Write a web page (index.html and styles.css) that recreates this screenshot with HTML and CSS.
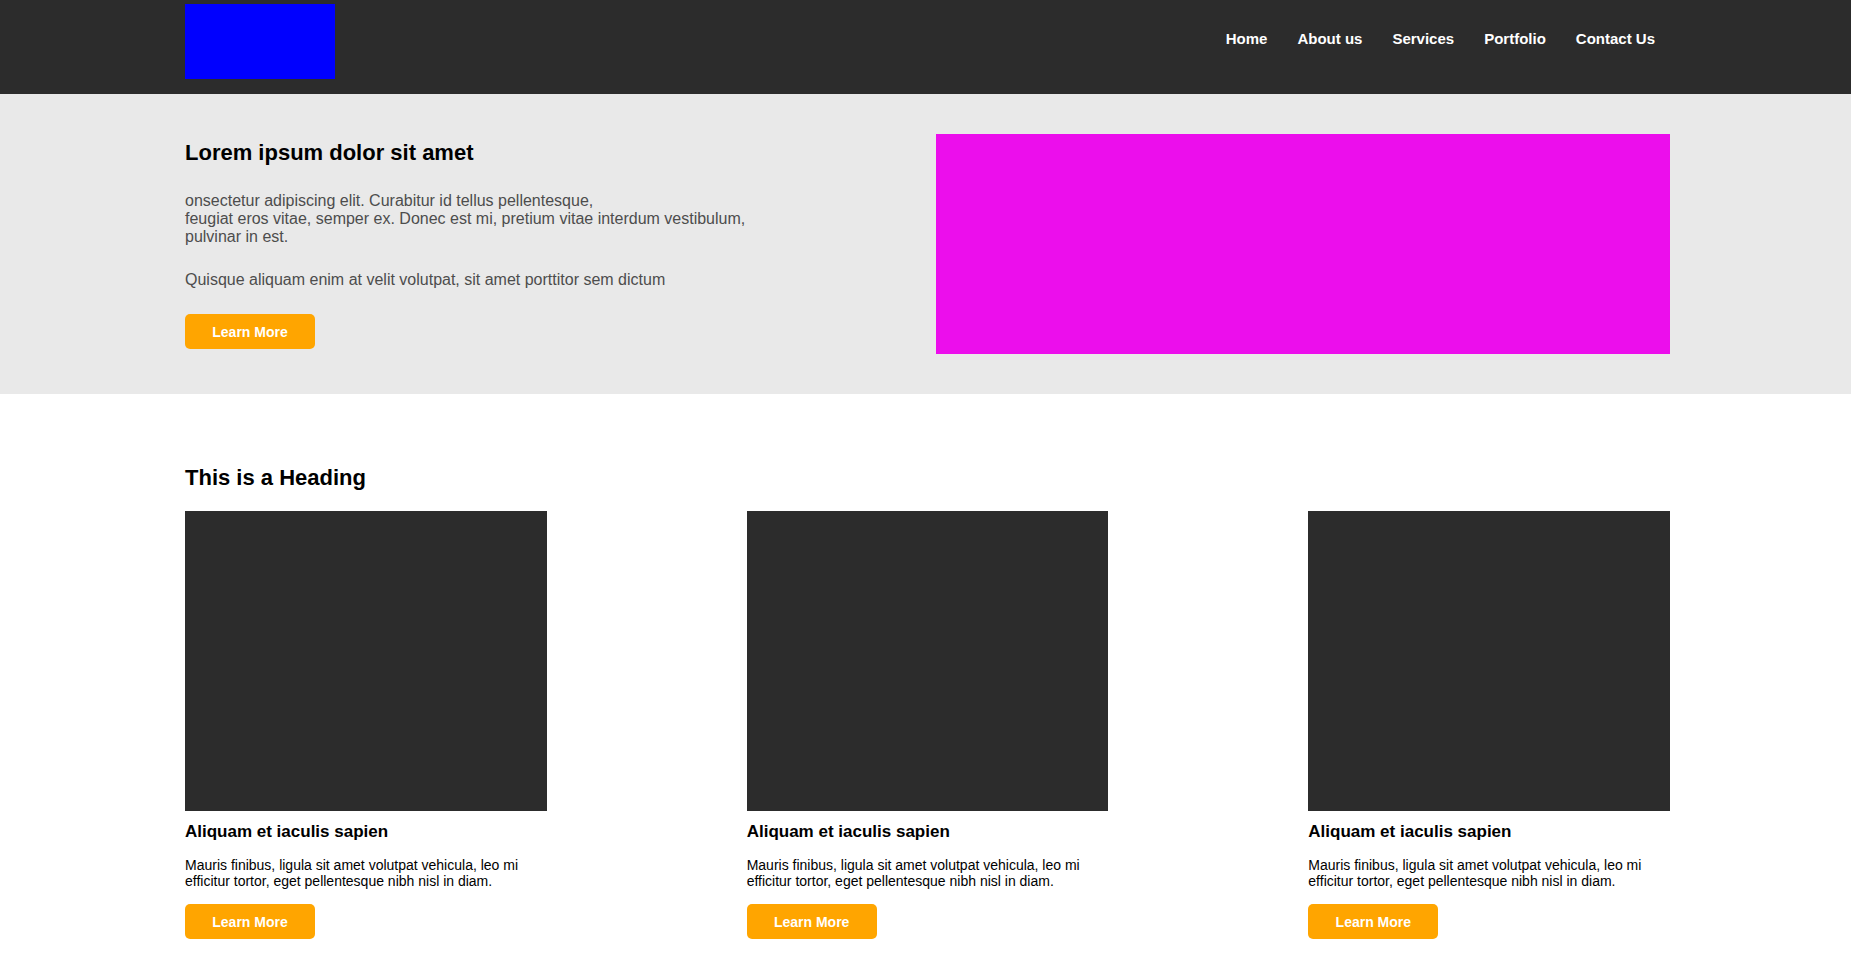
FILE: index.html
```html
<!DOCTYPE html>
<html lang="en">
<head>
<meta charset="utf-8">
<title>Home</title>
<link rel="stylesheet" href="styles.css">
</head>
<body>
<header class="header">
  <div class="logo"></div>
  <nav class="nav">
    <a href="#">Home</a>
    <a href="#">About us</a>
    <a href="#">Services</a>
    <a href="#">Portfolio</a>
    <a href="#">Contact Us</a>
  </nav>
</header>
<main>
  <section class="hero">
    <div class="hero-text">
      <h1 class="title">Lorem ipsum dolor sit amet</h1>
      <p>onsectetur adipiscing elit. Curabitur id tellus pellentesque,<br>feugiat eros vitae, semper ex. Donec est mi, pretium vitae interdum vestibulum,<br>pulvinar in est.</p>
      <p>Quisque aliquam enim at velit volutpat, sit amet porttitor sem dictum</p>
      <button class="button" type="button">Learn More</button>
    </div>
    <div class="hero-image"></div>
  </section>
  <section class="features">
    <h2 class="title">This is a Heading</h2>
    <div class="cards">
      <article class="card">
        <div class="card-image"></div>
        <h3>Aliquam et iaculis sapien</h3>
        <p>Mauris finibus, ligula sit amet volutpat vehicula, leo mi<br>efficitur tortor, eget pellentesque nibh nisl in diam.</p>
        <button class="button" type="button">Learn More</button>
      </article>
      <article class="card">
        <div class="card-image"></div>
        <h3>Aliquam et iaculis sapien</h3>
        <p>Mauris finibus, ligula sit amet volutpat vehicula, leo mi<br>efficitur tortor, eget pellentesque nibh nisl in diam.</p>
        <button class="button" type="button">Learn More</button>
      </article>
      <article class="card">
        <div class="card-image"></div>
        <h3>Aliquam et iaculis sapien</h3>
        <p>Mauris finibus, ligula sit amet volutpat vehicula, leo mi<br>efficitur tortor, eget pellentesque nibh nisl in diam.</p>
        <button class="button" type="button">Learn More</button>
      </article>
    </div>
  </section>
</main>
</body>
</html>
```
FILE: styles.css
```css
* {
  box-sizing: border-box;
  margin: 0;
}

body {
  font-family: "Liberation Sans", Arial, sans-serif;
  color: #000;
  background: #fff;
}

.header,
.hero,
.features {
  padding-left: 185px;
  padding-right: 181px;
}

.header {
  display: flex;
  justify-content: space-between;
  align-items: flex-start;
  padding-top: 4px;
  padding-bottom: 15px;
  background: #2c2c2c;
}

.logo {
  width: 150px;
  height: 75px;
  background: #00f;
}

.nav {
  display: flex;
  gap: 30px;
  padding: 26px 15px 0;
}

.nav a {
  font-size: 15px;
  line-height: 18px;
  font-weight: bold;
  color: #fff;
  text-decoration: none;
}

.hero {
  display: grid;
  grid-template-columns: 1fr 1fr;
  gap: 16px;
  padding-top: 40px;
  padding-bottom: 40px;
  background: #e9e9e9;
}

.hero-image {
  height: 220px;
  background: #ec0eec;
}

.title {
  font-size: 22px;
  line-height: 28px;
}

.hero-text {
  padding-top: 5px;
}

.hero-text p {
  margin-top: 25px;
  font-size: 16px;
  line-height: 18px;
  color: #4d4d4d;
}

.hero-text .button {
  margin-top: 25px;
}

.button {
  display: block;
  width: 130px;
  height: 35px;
  border: 0;
  border-radius: 5px;
  font-family: inherit;
  font-size: 14px;
  font-weight: bold;
  color: #fff;
  background: orange;
}

.features {
  padding-top: 70px;
  padding-bottom: 15px;
}

.cards {
  display: grid;
  grid-template-columns: 1fr 1fr 1fr;
  gap: 200px;
  margin-top: 19px;
}

.card-image {
  height: 300px;
  background: #2c2c2c;
}

.card h3 {
  margin-top: 10px;
  font-size: 17px;
  line-height: 22px;
}

.card p {
  margin-top: 14px;
  font-size: 14px;
  line-height: 16px;
}

.card .button {
  margin-top: 15px;
}
```
